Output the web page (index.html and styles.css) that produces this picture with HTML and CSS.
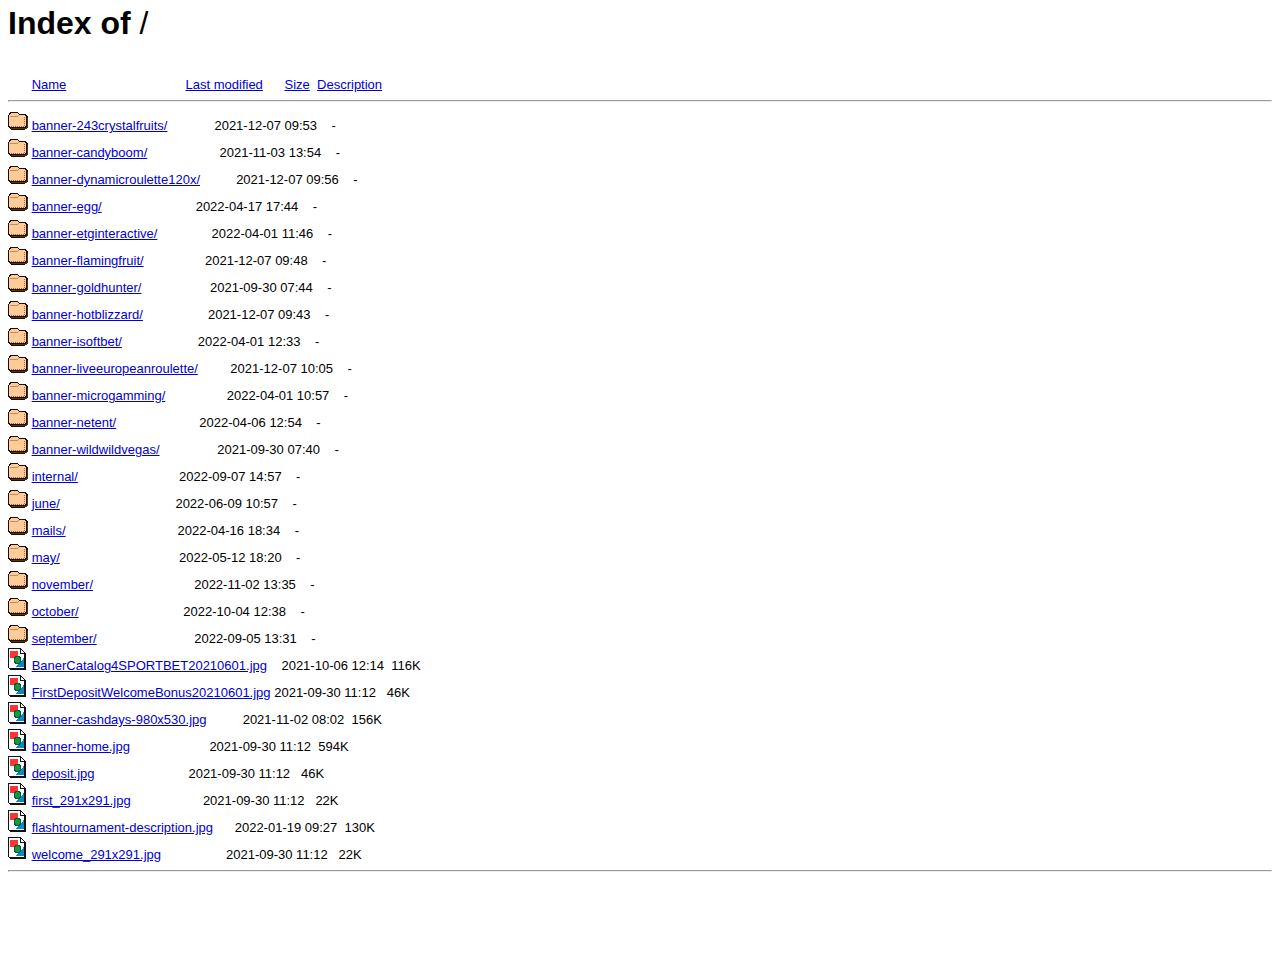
FILE: index.html
```
<!DOCTYPE html>
<html lang="en">
<head>
<meta charset="utf-8">
<title>Index of /</title>
<link rel="stylesheet" href="styles.css">
</head>
<body>
<svg class="sprites" aria-hidden="true">
<symbol id="folder" viewBox="0 0 20 22">
<path d="M2 4h8v1h1v1h7v1h1v1h1v11h-1v1h-1v1h-1v1H3v-1H2v-1H1v-1H0V7h1V5h1z" fill="#1c0e04"/>
<path d="M3 5h7v1h1v1h6v1h1v10h-1v1H2v-1H1V7h1V6h1z" fill="#ffcc99"/>
<path d="M3 20h15v-1h1v-9" stroke="#553311" fill="none"/>
<path d="M2 8.500h8M10 7.500h1" stroke="#cc8855" fill="none"/>
<path d="M16.500 9v9M3 18.500h14" stroke="#996633" stroke-dasharray="1 1" fill="none"/>
</symbol>
<symbol id="image" viewBox="0 0 20 22">
<path d="M0 0h13v1h1v1h1v1h1v1h1v1h1v17H2v-1H1v-1H0z" fill="#111"/>
<path d="M1 1h11v5h4v14H1z" fill="#fff"/>
<path d="M13 2h1v1h1v1h1v1h-3z" fill="#fff"/>
<path d="M2 3h8v7H2z" fill="#f33"/>
<path d="M16 10v9H8v-1h1v-1h1v-1h1v-1h1v-1h1v-1h1v-1h1v-2z" fill="#0f86c8"/>
<circle cx="9.500" cy="12" r="3.500" fill="#119944" stroke="#065a2c" stroke-width="1"/>
</symbol>
</svg>
<h1 class="title">Index of <span class="path">/</span></h1>
<pre class="listing"><span class="blank"></span> <a href="#">Name</a>                                 <a href="#">Last modified</a>      <a href="#">Size</a>  <a href="#">Description</a><hr class="rule"><svg class="icon"><use href="#folder"/></svg> <a href="#">banner-243crystalfruits/</a>             2021-12-07 09:53    -
<svg class="icon"><use href="#folder"/></svg> <a href="#">banner-candyboom/</a>                    2021-11-03 13:54    -
<svg class="icon"><use href="#folder"/></svg> <a href="#">banner-dynamicroulette120x/</a>          2021-12-07 09:56    -
<svg class="icon"><use href="#folder"/></svg> <a href="#">banner-egg/</a>                          2022-04-17 17:44    -
<svg class="icon"><use href="#folder"/></svg> <a href="#">banner-etginteractive/</a>               2022-04-01 11:46    -
<svg class="icon"><use href="#folder"/></svg> <a href="#">banner-flamingfruit/</a>                 2021-12-07 09:48    -
<svg class="icon"><use href="#folder"/></svg> <a href="#">banner-goldhunter/</a>                   2021-09-30 07:44    -
<svg class="icon"><use href="#folder"/></svg> <a href="#">banner-hotblizzard/</a>                  2021-12-07 09:43    -
<svg class="icon"><use href="#folder"/></svg> <a href="#">banner-isoftbet/</a>                     2022-04-01 12:33    -
<svg class="icon"><use href="#folder"/></svg> <a href="#">banner-liveeuropeanroulette/</a>         2021-12-07 10:05    -
<svg class="icon"><use href="#folder"/></svg> <a href="#">banner-microgamming/</a>                 2022-04-01 10:57    -
<svg class="icon"><use href="#folder"/></svg> <a href="#">banner-netent/</a>                       2022-04-06 12:54    -
<svg class="icon"><use href="#folder"/></svg> <a href="#">banner-wildwildvegas/</a>                2021-09-30 07:40    -
<svg class="icon"><use href="#folder"/></svg> <a href="#">internal/</a>                            2022-09-07 14:57    -
<svg class="icon"><use href="#folder"/></svg> <a href="#">june/</a>                                2022-06-09 10:57    -
<svg class="icon"><use href="#folder"/></svg> <a href="#">mails/</a>                               2022-04-16 18:34    -
<svg class="icon"><use href="#folder"/></svg> <a href="#">may/</a>                                 2022-05-12 18:20    -
<svg class="icon"><use href="#folder"/></svg> <a href="#">november/</a>                            2022-11-02 13:35    -
<svg class="icon"><use href="#folder"/></svg> <a href="#">october/</a>                             2022-10-04 12:38    -
<svg class="icon"><use href="#folder"/></svg> <a href="#">september/</a>                           2022-09-05 13:31    -
<svg class="icon"><use href="#image"/></svg> <a href="#">BanerCatalog4SPORTBET20210601.jpg</a>    2021-10-06 12:14  116K
<svg class="icon"><use href="#image"/></svg> <a href="#">FirstDepositWelcomeBonus20210601.jpg</a> 2021-09-30 11:12   46K
<svg class="icon"><use href="#image"/></svg> <a href="#">banner-cashdays-980x530.jpg</a>          2021-11-02 08:02  156K
<svg class="icon"><use href="#image"/></svg> <a href="#">banner-home.jpg</a>                      2021-09-30 11:12  594K
<svg class="icon"><use href="#image"/></svg> <a href="#">deposit.jpg</a>                          2021-09-30 11:12   46K
<svg class="icon"><use href="#image"/></svg> <a href="#">first_291x291.jpg</a>                    2021-09-30 11:12   22K
<svg class="icon"><use href="#image"/></svg> <a href="#">flashtournament-description.jpg</a>      2022-01-19 09:27  130K
<svg class="icon"><use href="#image"/></svg> <a href="#">welcome_291x291.jpg</a>                  2021-09-30 11:12   22K
<hr class="rule"></pre>
</body>
</html>
```
FILE: styles.css
```
body {
  margin: 5px 8px 8px;
  background: #fff;
  color: #000;
  font-family: "Liberation Sans", Helvetica, Arial, sans-serif;
}

.sprites {
  display: none;
}

.title {
  margin: 0 0 25px;
  font-size: 32px;
  line-height: 37px;
}

.path {
  font-weight: normal;
}

.listing {
  margin: 0;
  font-family: inherit;
  font-size: 13px;
  line-height: 19px;
}

.listing a {
  color: #0000d4;
  text-decoration: underline;
}

.blank,
.icon {
  display: inline-block;
  width: 20px;
  height: 22px;
  vertical-align: baseline;
}

.icon {
  shape-rendering: crispEdges;
}

.rule {
  margin: 6px 0;
}
```
